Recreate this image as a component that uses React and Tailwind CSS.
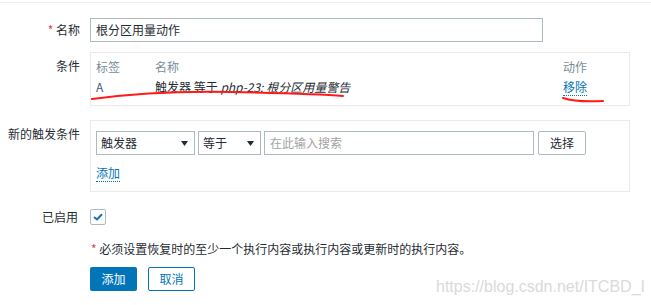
import React from "react";

const font = { fontFamily: '"Noto Sans CJK SC", "Liberation Sans", sans-serif' };

function Caret() {
  return (
    <svg width="7" height="5" viewBox="0 0 7 5" className="shrink-0">
      <path d="M0 0 H7 L3.5 5 Z" fill="#1f2c33" />
    </svg>
  );
}

function Label({ children, className = "" }) {
  return (
    <div className={`w-[80px] shrink-0 text-right leading-[14px] ${className}`}>{children}</div>
  );
}

export default function App() {
  return (
    <div
      className="relative w-[651px] h-[305px] bg-white text-[12px] text-[#1f2c33] overflow-hidden"
      style={font}
    >
      <div className="mt-[2px] h-px flex">
        <div className="w-[63px] bg-[#eaf0f6]" />
        <div className="flex-1 bg-[#ebeef0]" />
      </div>

      {/* Name row */}
      <div className="mt-[15px] flex items-center">
        <Label>
          <span className="text-[#d64545]">*</span> 名称
        </Label>
        <div className="ml-[10px] w-[453px] h-[24px] border border-[#acbbc0] px-[5px] flex items-center">
          根分区用量动作
        </div>
      </div>

      {/* Conditions row */}
      <div className="mt-[10px] flex items-start">
        <Label className="pt-[7px]">条件</Label>
        <div className="ml-[10px] w-[540px] h-[54px] border border-[#ebebeb] pl-[5px] pt-[7px]">
          <div className="flex leading-[14px] text-[#768d99]">
            <div className="w-[59px]">标签</div>
            <div className="w-[408px]">名称</div>
            <div>动作</div>
          </div>
          <div className="flex leading-[14px] mt-[6px]">
            <div className="w-[59px] text-[#3b5a7a]">A</div>
            <div className="w-[408px]">
              触发器 等于 <span className="italic">php-23: 根分区用量警告</span>
            </div>
            <div>
              <span className="text-[#0275b8] border-b border-dotted border-[#0275b8]">移除</span>
            </div>
          </div>
        </div>
      </div>

      {/* New trigger row */}
      <div className="mt-[14px] flex items-start">
        <Label className="pt-[7px]">新的触发条件</Label>
        <div className="ml-[10px] w-[540px] h-[72px] border border-[#ebebeb] pl-[5px] pt-[10px]">
          <div className="flex gap-[3px]">
            <div className="w-[99px] h-[24px] border border-[#acbbc0] pl-[4px] pr-[6px] flex items-center justify-between">
              <span>触发器</span>
              <Caret />
            </div>
            <div className="w-[63px] h-[24px] border border-[#acbbc0] pl-[4px] pr-[6px] flex items-center justify-between">
              <span>等于</span>
              <Caret />
            </div>
            <div className="w-[270px] h-[24px] border border-[#acbbc0] px-[5px] flex items-center text-[#a3a3a3]">
              在此输入搜索
            </div>
            <div className="ml-[1px] w-[48px] h-[24px] border border-[#acbbc0] rounded-[2px] flex items-center justify-center">
              选择
            </div>
          </div>
          <div className="mt-[11px] leading-[14px]">
            <span className="text-[#0275b8] border-b border-dotted border-[#0275b8]">添加</span>
          </div>
        </div>
      </div>

      {/* Enabled row */}
      <div className="mt-[17px] flex items-center">
        <Label className="pr-[2px]">已启用</Label>
        <div className="ml-[10px] w-[16px] h-[16px] border border-[#acbbc0] rounded-[2px] flex items-center justify-center">
          <svg width="10" height="8" viewBox="0 0 10 8">
            <path d="M1 4 L4 6.5 L9 1.2" fill="none" stroke="#1a6fb0" strokeWidth="2" />
          </svg>
        </div>
      </div>

      {/* Note */}
      <div className="mt-[17px] ml-[91px] leading-[14px]">
        <span className="text-[#d64545]">*</span> 必须设置恢复时的至少一个执行内容或执行内容或更新时的执行内容。
      </div>

      {/* Buttons */}
      <div className="mt-[11px] ml-[90px] flex gap-[11px]">
        <div className="w-[47px] h-[24px] bg-[#0275b8] text-white rounded-[2px] flex items-center justify-center">
          添加
        </div>
        <div className="w-[47px] h-[24px] border border-[#0275b8] text-[#0275b8] rounded-[2px] flex items-center justify-center">
          取消
        </div>
      </div>

      {/* Watermark */}
      <div
        className="absolute left-[436px] top-[277px] text-[16px] leading-[20px] text-[#dadada]"
        style={{ fontFamily: '"Liberation Sans", Arial, sans-serif' }}
      >
        https://blog.csdn.net/ITCBD_I
      </div>

      {/* Red hand-drawn annotations */}
      <svg className="absolute left-0 top-0 pointer-events-none" width="651" height="305">
        <path
          d="M92,99 C130,94 180,91 230,92 S320,94 343,96"
          fill="none"
          stroke="#ff1a1a"
          strokeWidth="2"
          strokeLinecap="round"
        />
        <path
          d="M563,98 C572,101 585,102 603,101"
          fill="none"
          stroke="#ff1a1a"
          strokeWidth="2"
          strokeLinecap="round"
        />
      </svg>
    </div>
  );
}
